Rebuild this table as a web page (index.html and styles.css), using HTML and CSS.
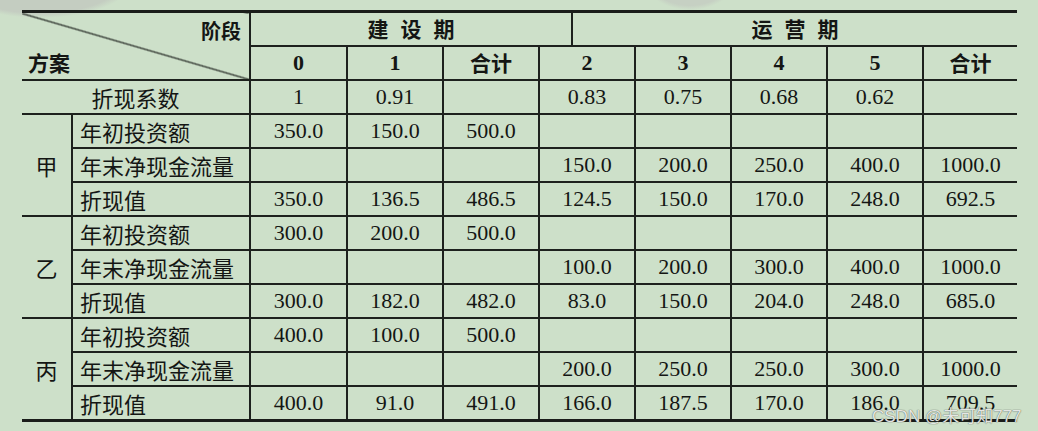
FILE: index.html
```html
<!DOCTYPE html>
<html lang="zh">
<head>
<meta charset="utf-8">
<title>方案折现值</title>
<link rel="stylesheet" href="styles.css">
</head>
<body>
<div class="page">
<table class="grid">
  <colgroup>
    <col class="w-group"><col class="w-label">
    <col class="w-c0"><col class="w-c"><col class="w-c">
    <col class="w-c2a"><col class="w-c2b">
    <col class="w-c"><col class="w-c"><col class="w-c"><col class="w-last">
  </colgroup>
  <tr class="row">
    <td class="diag first" colspan="2" rowspan="2">
      <div class="diag-box">
        <span class="hd stage">阶段</span>
        <span class="hd plan">方案</span>
      </div>
    </td>
    <td class="hd period split" colspan="4">建设期</td>
    <td class="hd period last" colspan="6">运营期</td>
  </tr>
  <tr class="row">
    <td class="num b">0</td>
    <td class="num b">1</td>
    <td class="hd">合计</td>
    <td class="num b" colspan="2">2</td>
    <td class="num b">3</td>
    <td class="num b">4</td>
    <td class="num b">5</td>
    <td class="hd last">合计</td>
  </tr>
  <tr class="row">
    <td class="lbl-c first" colspan="2">折现系数</td>
    <td class="num">1</td>
    <td class="num">0.91</td>
    <td class="num"></td>
    <td class="num" colspan="2">0.83</td>
    <td class="num">0.75</td>
    <td class="num">0.68</td>
    <td class="num">0.62</td>
    <td class="num last"></td>
  </tr>

  <tr class="row">
    <td class="grp first" rowspan="3">甲</td>
    <td class="lbl">年初投资额</td>
    <td class="num">350.0</td><td class="num">150.0</td><td class="num">500.0</td>
    <td class="num" colspan="2"></td><td class="num"></td><td class="num"></td><td class="num"></td><td class="num last"></td>
  </tr>
  <tr class="row">
    <td class="lbl">年末净现金流量</td>
    <td class="num"></td><td class="num"></td><td class="num"></td>
    <td class="num" colspan="2">150.0</td><td class="num">200.0</td><td class="num">250.0</td><td class="num">400.0</td><td class="num last">1000.0</td>
  </tr>
  <tr class="row">
    <td class="lbl">折现值</td>
    <td class="num">350.0</td><td class="num">136.5</td><td class="num">486.5</td>
    <td class="num" colspan="2">124.5</td><td class="num">150.0</td><td class="num">170.0</td><td class="num">248.0</td><td class="num last">692.5</td>
  </tr>

  <tr class="row">
    <td class="grp first" rowspan="3">乙</td>
    <td class="lbl">年初投资额</td>
    <td class="num">300.0</td><td class="num">200.0</td><td class="num">500.0</td>
    <td class="num" colspan="2"></td><td class="num"></td><td class="num"></td><td class="num"></td><td class="num last"></td>
  </tr>
  <tr class="row">
    <td class="lbl">年末净现金流量</td>
    <td class="num"></td><td class="num"></td><td class="num"></td>
    <td class="num" colspan="2">100.0</td><td class="num">200.0</td><td class="num">300.0</td><td class="num">400.0</td><td class="num last">1000.0</td>
  </tr>
  <tr class="row">
    <td class="lbl">折现值</td>
    <td class="num">300.0</td><td class="num">182.0</td><td class="num">482.0</td>
    <td class="num" colspan="2">83.0</td><td class="num">150.0</td><td class="num">204.0</td><td class="num">248.0</td><td class="num last">685.0</td>
  </tr>

  <tr class="row">
    <td class="grp first" rowspan="3">丙</td>
    <td class="lbl">年初投资额</td>
    <td class="num">400.0</td><td class="num">100.0</td><td class="num">500.0</td>
    <td class="num" colspan="2"></td><td class="num"></td><td class="num"></td><td class="num"></td><td class="num last"></td>
  </tr>
  <tr class="row">
    <td class="lbl">年末净现金流量</td>
    <td class="num"></td><td class="num"></td><td class="num"></td>
    <td class="num" colspan="2">200.0</td><td class="num">250.0</td><td class="num">250.0</td><td class="num">300.0</td><td class="num last">1000.0</td>
  </tr>
  <tr class="row">
    <td class="lbl">折现值</td>
    <td class="num">400.0</td><td class="num">91.0</td><td class="num">491.0</td>
    <td class="num" colspan="2">166.0</td><td class="num">187.5</td><td class="num">170.0</td><td class="num">186.0</td><td class="num last">709.5</td>
  </tr>
</table>
<div class="watermark">CSDN @未可知777</div>
</div>
</body>
</html>
```

FILE: styles.css
```css
html, body {
  margin: 0;
  padding: 0;
}
body {
  width: 1038px;
  height: 431px;
  overflow: hidden;
  background-color: #cde0c9;
  background-image:
    radial-gradient(ellipse 95px 40px at 40px -22px, #c4cdc1 0, #c4cdc1 88%, rgba(196,205,193,0) 100%),
    radial-gradient(ellipse 50px 38px at 690px -28px, #c6d0c3 0, #c6d0c3 88%, rgba(198,208,195,0) 100%);
  background-repeat: no-repeat;
  color: #141614;
  font-family: "Liberation Serif", "Noto Sans CJK SC", serif;
}
.page {
  position: relative;
  padding: 10px 0 0 22px;
}
.grid {
  border-collapse: collapse;
  table-layout: fixed;
  width: 995px;
  border-top: 3px solid #1a1d1a;
  border-bottom: 3px solid #1a1d1a;
}
.w-group { width: 50px; }
.w-label { width: 178px; }
.w-c0 { width: 97px; }
.w-c { width: 96px; }
.w-c2a { width: 33px; }
.w-c2b { width: 63px; }
.w-last { width: 94px; }

.row { height: 34px; }
.grid td {
  border: 2px solid #1d211d;
  padding: 0;
  text-align: center;
  vertical-align: middle;
  line-height: 1;
  white-space: nowrap;
}
.grid td.first { border-left: none; }
.grid td.last { border-right: none; }

.num {
  font-family: "Liberation Serif", serif;
  font-size: 22px;
}
.num.b { font-weight: 700; }

.hd {
  font-family: "Noto Sans CJK SC", sans-serif;
  font-weight: 700;
  font-size: 21px;
}
.period {
  letter-spacing: 12px;
  padding-left: 12px !important;
}

.lbl, .lbl-c, .grp {
  font-family: "Noto Sans CJK SC", sans-serif;
  font-size: 22px;
  font-weight: 400;
}
.grid td.lbl {
  text-align: left;
  padding-left: 7px;
}

.diag {
  background-image: linear-gradient(to top right, rgba(0,0,0,0) calc(50% - 1.2px), #1d211d 50%, rgba(0,0,0,0) calc(50% + 1.2px));
}
.diag-box {
  height: 66px;
  display: flex;
  flex-direction: column;
  justify-content: space-between;
  padding: 8px 8px 6px 6px;
  box-sizing: border-box;
}
.stage { align-self: flex-end; font-size: 20px; }
.plan { align-self: flex-start; font-size: 21px; }

.watermark {
  position: absolute;
  left: 872px;
  top: 402px;
  font-family: "Liberation Sans", "Noto Sans CJK SC", sans-serif;
  font-size: 17px;
  color: rgba(255, 255, 255, 0.85);
  text-shadow: 0 0 1px rgba(70, 80, 70, 0.85), 0 0 1px rgba(70, 80, 70, 0.6);
  white-space: nowrap;
}
```
